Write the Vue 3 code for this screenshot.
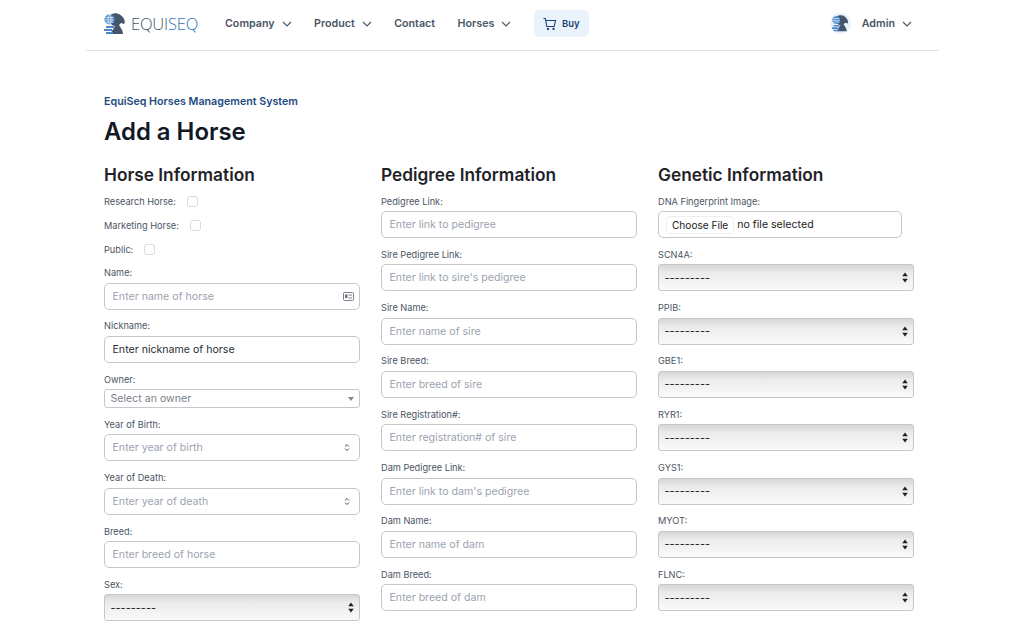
<script setup>
const navItems = [
  { label: "Company", menu: true },
  { label: "Product", menu: true },
  { label: "Contact", menu: false },
  { label: "Horses", menu: true },
];

const checks = ["Research Horse:", "Marketing Horse:", "Public:"];

const horseFields = [
  { label: "Name:", placeholder: "Enter name of horse", type: "input", icon: "card" },
  { label: "Nickname:", placeholder: "Enter nickname of horse", type: "input", dark: true },
  { label: "Owner:", placeholder: "Select an owner", type: "owner" },
  { label: "Year of Birth:", placeholder: "Enter year of birth", type: "input", icon: "spin" },
  { label: "Year of Death:", placeholder: "Enter year of death", type: "input", icon: "spin" },
  { label: "Breed:", placeholder: "Enter breed of horse", type: "input" },
  { label: "Sex:", type: "select" },
];

const pedigreeFields = [
  { label: "Pedigree Link:", placeholder: "Enter link to pedigree", type: "input" },
  { label: "Sire Pedigree Link:", placeholder: "Enter link to sire's pedigree", type: "input" },
  { label: "Sire Name:", placeholder: "Enter name of sire", type: "input" },
  { label: "Sire Breed:", placeholder: "Enter breed of sire", type: "input" },
  { label: "Sire Registration#:", placeholder: "Enter registration# of sire", type: "input" },
  { label: "Dam Pedigree Link:", placeholder: "Enter link to dam's pedigree", type: "input" },
  { label: "Dam Name:", placeholder: "Enter name of dam", type: "input" },
  { label: "Dam Breed:", placeholder: "Enter breed of dam", type: "input" },
];

const geneFields = ["SCN4A:", "PPIB:", "GBE1:", "RYR1:", "GYS1:", "MYOT:", "FLNC:"];
</script>

<template>
  <div class="page">
    <header class="nav">
      <a class="logo">
        <svg class="mark" width="22" height="22" viewBox="0 0 22 22">
          <path d="M8 1c5-2 10 1 12 5 1 2 1 4 0 5l-3-1-2 2c2 3 4 6 4 9H7c0-3 3-5 4-8-3 0-5-3-5-6 0-3 0-5 2-6z" fill="#44566e" />
          <circle cx="5.500" cy="6.500" r="5" fill="#4a88c7" />
          <path d="M1.500 4.500h8M1 6.800h9M1.500 9h8M5.500 1.500c-2 3-2 7 0 10M5.500 1.500c2 3 2 7 0 10" stroke="#fff" stroke-width=".7" fill="none" />
          <path d="M2 14h8M0 17h8M2 20h7" stroke="#4a88c7" stroke-width="2" />
        </svg>
        <span class="logo-text">EQUI<b>SEQ</b></span>
      </a>
      <nav class="nav-links">
        <a v-for="item in navItems" :key="item.label" class="nav-link">
          {{ item.label }}
          <svg v-if="item.menu" class="chev" width="10" height="6" viewBox="0 0 10 6">
            <path d="M1 1l4 4 4-4" fill="none" stroke="#4b5563" stroke-width="1.100" />
          </svg>
        </a>
        <a class="buy">
          <svg width="14" height="14" viewBox="0 0 14 14" fill="none" stroke="#1e3f6f" stroke-width="1.100">
            <path d="M.5 1.500h1.800l1.500 8h7.400l1.300-6H2.800" />
            <circle cx="5" cy="12" r=".6" />
            <circle cx="10.500" cy="12" r=".6" />
          </svg>
          Buy
        </a>
      </nav>
      <a class="user">
        <span class="avatar">
          <svg width="17" height="17" viewBox="0 0 22 22">
            <path d="M8 1c5-2 10 1 12 5 1 2 1 4 0 5l-3-1-2 2c2 3 4 6 4 9H7c0-3 3-5 4-8-3 0-5-3-5-6 0-3 0-5 2-6z" fill="#44566e" />
            <circle cx="5.500" cy="6.500" r="5" fill="#4a88c7" />
            <path d="M1.500 4.500h8M1 6.800h9M1.500 9h8" stroke="#fff" stroke-width=".8" />
            <path d="M2 14h8M0 17h8M2 20h7" stroke="#4a88c7" stroke-width="2" />
          </svg>
        </span>
        Admin
        <svg class="chev" width="10" height="6" viewBox="0 0 10 6">
          <path d="M1 1l4 4 4-4" fill="none" stroke="#4b5563" stroke-width="1.100" />
        </svg>
      </a>
    </header>

    <main class="content">
      <p class="eyebrow">EquiSeq Horses Management System</p>
      <h1>Add a Horse</h1>

      <div class="columns">
        <section>
          <h2>Horse Information</h2>
          <div class="checks">
            <label v-for="c in checks" :key="c" class="check">
              {{ c }}
              <input type="checkbox" />
            </label>
          </div>
          <div v-for="f in horseFields" :key="f.label" class="field">
            <label>{{ f.label }}</label>
            <div v-if="f.type === 'input'" class="control">
              <input class="text" :class="{ dark: f.dark }" :placeholder="f.placeholder" />
              <svg v-if="f.icon === 'card'" class="icon card" width="11" height="9" viewBox="0 0 11 9" fill="none" stroke="#6b7280" stroke-width=".9">
                <rect x=".5" y=".5" width="10" height="8" rx="1" />
                <rect x="2" y="2.500" width="2.500" height="3.500" fill="#6b7280" stroke="none" />
                <path d="M5.500 3h3.500M5.500 6h3.500" />
              </svg>
              <svg v-if="f.icon === 'spin'" class="icon spin" width="6" height="9" viewBox="0 0 7 10" fill="none" stroke="#374151" stroke-width="1.100">
                <path d="M1.200 3.800L3.500 1.500l2.300 2.300M1.200 6.200L3.500 8.500l2.300-2.300" />
              </svg>
            </div>
            <div v-else-if="f.type === 'owner'" class="owner">
              <span>{{ f.placeholder }}</span>
              <i class="caret"></i>
            </div>
            <div v-else class="select">
              <span>---------</span>
              <svg width="6" height="11" viewBox="0 0 6 11" fill="#222"><path d="M3 .5L5.800 4.300H.2zM3 10.500L.2 6.700h5.600z" /></svg>
            </div>
          </div>
        </section>

        <section>
          <h2>Pedigree Information</h2>
          <div v-for="f in pedigreeFields" :key="f.label" class="field">
            <label>{{ f.label }}</label>
            <div class="control">
              <input class="text" :placeholder="f.placeholder" />
            </div>
          </div>
        </section>

        <section>
          <h2>Genetic Information</h2>
          <div class="field">
            <label>DNA Fingerprint Image:</label>
            <div class="file">
              <button type="button">Choose File</button>
              <span>no file selected</span>
            </div>
          </div>
          <div v-for="g in geneFields" :key="g" class="field">
            <label>{{ g }}</label>
            <div class="select">
              <span>---------</span>
              <svg width="6" height="11" viewBox="0 0 6 11" fill="#222"><path d="M3 .5L5.800 4.300H.2zM3 10.500L.2 6.700h5.600z" /></svg>
            </div>
          </div>
        </section>
      </div>
    </main>
  </div>
</template>

<style>
html,
body {
  margin: 0;
  background: #fff;
}
</style>

<style scoped>
.page {
  width: 1024px;
  height: 622px;
  overflow: hidden;
  font-family: Inter, "Liberation Sans", sans-serif;
  color: #374151;
}

.nav {
  box-sizing: border-box;
  width: 853px;
  height: 51px;
  margin-left: 86px;
  padding: 0 27px 3px 18px;
  border-bottom: 1px solid #dce1e6;
  display: flex;
  align-items: center;
}

.logo {
  display: flex;
  align-items: center;
  gap: 5px;
  width: 94px;
  flex: none;
}

.mark {
  flex: none;
}

.logo-text {
  font-family: "Open Sans", sans-serif;
  font-weight: 300;
  font-size: 16.500px;
  letter-spacing: -0.2px;
  color: #44566e;
}

.logo-text b {
  font-weight: 300;
  color: #2f74bd;
}

.nav-links {
  display: flex;
  align-items: center;
  gap: 22.500px;
  margin-left: 27px;
}

.nav-link,
.user {
  display: flex;
  align-items: center;
  gap: 7px;
  font-size: 10.700px;
  font-weight: 600;
  color: #4b5563;
}

.chev {
  flex: none;
}

.buy {
  display: flex;
  align-items: center;
  gap: 5px;
  height: 27px;
  padding: 0 9px;
  border-radius: 5px;
  background: #eaf3fb;
  font-size: 9.500px;
  font-weight: 600;
  color: #1e3f6f;
}

.user {
  margin-left: auto;
}

.avatar {
  width: 21px;
  height: 21px;
  margin-right: 4px;
  border-radius: 50%;
  background: #e6f0fa;
  display: flex;
  align-items: center;
  justify-content: center;
}

.content {
  padding: 44px 110px 0 104px;
}

.eyebrow {
  margin: 0;
  font-size: 10.700px;
  line-height: 13px;
  font-weight: 600;
  color: #1e4a80;
}

h1 {
  margin: 8px 0 0;
  font-size: 23.900px;
  line-height: 32px;
  font-weight: 600;
  color: #111827;
}

.columns {
  display: grid;
  grid-template-columns: repeat(3, 256px);
  column-gap: 21px;
  margin-top: 14.500px;
}

h2 {
  margin: 0 0 9px;
  font-size: 17.300px;
  line-height: 24px;
  font-weight: 600;
  color: #1f2328;
}

.checks {
  display: flex;
  flex-direction: column;
  gap: 12px;
  margin-bottom: 11.500px;
}

.check {
  display: flex;
  align-items: center;
  gap: 11px;
  height: 12px;
  font-size: 9.200px;
  color: #4b5563;
}

.check input {
  appearance: none;
  width: 11px;
  height: 11px;
  margin: 0;
  border: 1px solid #d8dbe0;
  border-radius: 3px;
  background: #fff;
}

.field {
  margin-bottom: 10.830px;
}

.field > label {
  display: block;
  margin-bottom: 3.500px;
  font-size: 9.200px;
  line-height: 12px;
  color: #4b5563;
}

.control {
  position: relative;
}

.text {
  box-sizing: border-box;
  display: block;
  width: 100%;
  height: 27px;
  padding: 0 7.500px;
  border: 1px solid #c4c8ce;
  border-radius: 5px;
  background: #fff;
  font: 400 10.600px Inter, sans-serif;
  color: #222;
  outline: none;
}

.text::placeholder {
  color: #9ca3af;
}

.text.dark::placeholder {
  color: #2a2f36;
}

.icon {
  position: absolute;
  top: 9px;
}

.icon.card {
  right: 6px;
}

.icon.spin {
  right: 10px;
}

.owner {
  box-sizing: border-box;
  height: 19px;
  padding: 0 5px 0 5.500px;
  border: 1px solid #c4c8ce;
  border-radius: 3px;
  display: flex;
  align-items: center;
  justify-content: space-between;
  font-size: 10.600px;
  color: #7b8088;
}

.caret {
  width: 0;
  height: 0;
  border-left: 3px solid transparent;
  border-right: 3px solid transparent;
  border-top: 4px solid #888;
}

.select {
  box-sizing: border-box;
  height: 27px;
  padding: 0 5.500px;
  border: 1px solid #c4c8ce;
  border-radius: 3px;
  background: linear-gradient(#d6d6d6, #ebebeb 30%, #fafafa);
  display: flex;
  align-items: center;
  justify-content: space-between;
  font-size: 11px;
  color: #222;
}

.file {
  box-sizing: border-box;
  width: 244px;
  height: 27px;
  padding: 0 7px;
  border: 1px solid #c4c8ce;
  border-radius: 5px;
  display: flex;
  align-items: center;
  gap: 3px;
  font-size: 10.600px;
  color: #222;
}

.file button {
  height: 18px;
  padding: 0 5px;
  border: 1px solid #eceef0;
  border-radius: 4px;
  background: #fff;
  font: 400 10.100px Inter, sans-serif;
  color: #222;
}
</style>
